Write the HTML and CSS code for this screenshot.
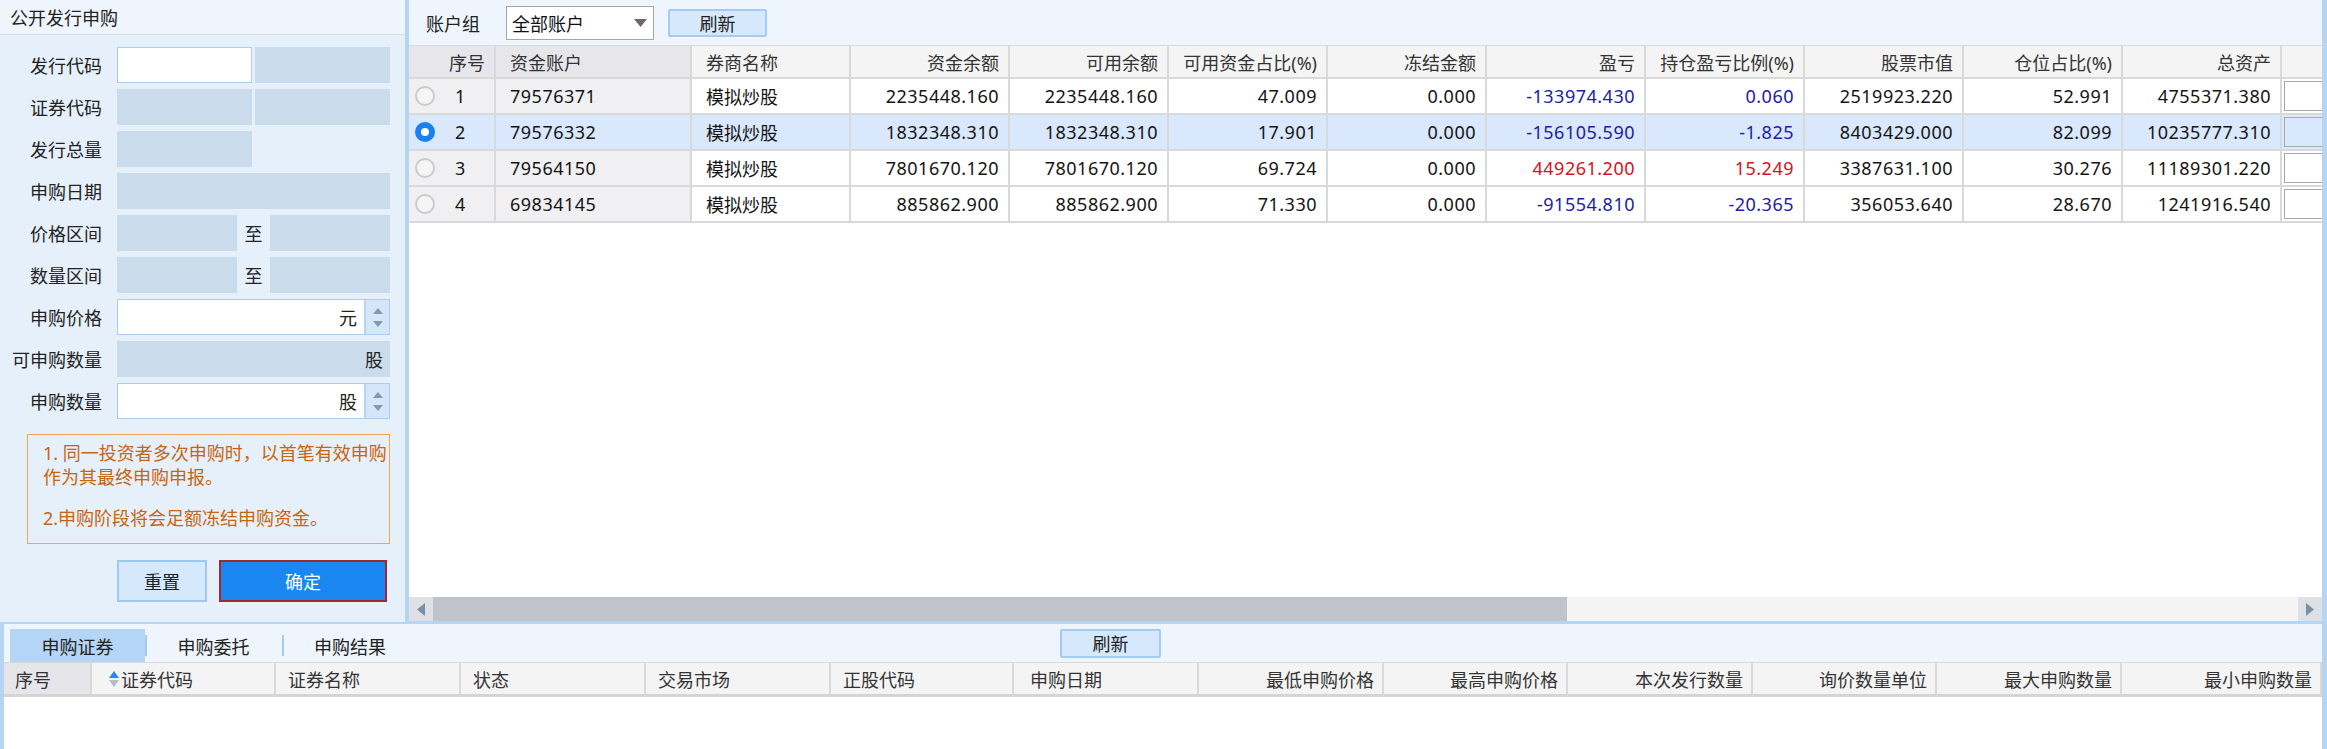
FILE: index.html
```html
<!DOCTYPE html>
<html lang="zh-CN">
<head>
<meta charset="utf-8">
<title>公开发行申购</title>
<link rel="stylesheet" href="styles.css">
</head>
<body>
<div class="app">
  <div class="top">
    <aside class="left">
      <div class="left-title">公开发行申购</div>
      <div class="form">
        <div class="frow"><label>发行代码</label><div class="pair"><div class="inp"></div><div class="box"></div></div></div>
        <div class="frow"><label>证券代码</label><div class="pair"><div class="box"></div><div class="box"></div></div></div>
        <div class="frow"><label>发行总量</label><div class="pair"><div class="box"></div><div></div></div></div>
        <div class="frow"><label>申购日期</label><div class="box"></div></div>
        <div class="frow"><label>价格区间</label><div class="range"><div class="box"></div><span class="to">至</span><div class="box"></div></div></div>
        <div class="frow"><label>数量区间</label><div class="range"><div class="box"></div><span class="to">至</span><div class="box"></div></div></div>
        <div class="frow"><label>申购价格</label>
          <div class="spin"><div class="spin-val">元</div>
            <div class="spin-btns">
              <svg width="10" height="6" viewBox="0 0 10 6"><polygon points="5,0 10,6 0,6" fill="#8898a9"/></svg>
              <svg width="10" height="6" viewBox="0 0 10 6"><polygon points="0,0 10,0 5,6" fill="#8898a9"/></svg>
            </div>
          </div>
        </div>
        <div class="frow"><label>可申购数量</label><div class="box unit">股</div></div>
        <div class="frow"><label>申购数量</label>
          <div class="spin"><div class="spin-val">股</div>
            <div class="spin-btns">
              <svg width="10" height="6" viewBox="0 0 10 6"><polygon points="5,0 10,6 0,6" fill="#8898a9"/></svg>
              <svg width="10" height="6" viewBox="0 0 10 6"><polygon points="0,0 10,0 5,6" fill="#8898a9"/></svg>
            </div>
          </div>
        </div>
      </div>
      <div class="notice">
        <p>1. 同一投资者多次申购时，以首笔有效申购<br>作为其最终申购申报。</p>
        <p>2.申购阶段将会足额冻结申购资金。</p>
      </div>
      <div class="btns">
        <button class="btn btn-reset">重置</button>
        <button class="btn btn-ok">确定</button>
      </div>
    </aside>

    <section class="main">
      <div class="toolbar">
        <span class="tb-label">账户组</span>
        <div class="select"><span>全部账户</span>
          <svg width="13" height="8" viewBox="0 0 13 8"><polygon points="0,0 13,0 6.5,8" fill="#6b6b6b"/></svg>
        </div>
        <button class="btn-refresh">刷新</button>
      </div>
      <div class="table">
        <div class="trow thead">
          <div class="fz">序号</div><div class="fz l">资金账户</div><div class="l">券商名称</div>
          <div>资金余额</div><div>可用余额</div><div>可用资金占比(%)</div><div>冻结金额</div>
          <div>盈亏</div><div>持仓盈亏比例(%)</div><div>股票市值</div><div>仓位占比(%)</div><div>总资产</div><div></div>
        </div>
        <div class="trow">
          <div class="fz c-idx"><span class="radio"></span><span class="n">1</span></div><div class="fz l num">79576371</div><div class="l">模拟炒股</div>
          <div class="num">2235448.160</div><div class="num">2235448.160</div><div class="num">47.009</div><div class="num">0.000</div>
          <div class="num neg">-133974.430</div><div class="num neg">0.060</div><div class="num">2519923.220</div><div class="num">52.991</div><div class="num">4755371.380</div><div class="cx"><i></i></div>
        </div>
        <div class="trow sel">
          <div class="fz c-idx"><span class="radio on"></span><span class="n">2</span></div><div class="fz l num">79576332</div><div class="l">模拟炒股</div>
          <div class="num">1832348.310</div><div class="num">1832348.310</div><div class="num">17.901</div><div class="num">0.000</div>
          <div class="num neg">-156105.590</div><div class="num neg">-1.825</div><div class="num">8403429.000</div><div class="num">82.099</div><div class="num">10235777.310</div><div class="cx"><i></i></div>
        </div>
        <div class="trow">
          <div class="fz c-idx"><span class="radio"></span><span class="n">3</span></div><div class="fz l num">79564150</div><div class="l">模拟炒股</div>
          <div class="num">7801670.120</div><div class="num">7801670.120</div><div class="num">69.724</div><div class="num">0.000</div>
          <div class="num pos">449261.200</div><div class="num pos">15.249</div><div class="num">3387631.100</div><div class="num">30.276</div><div class="num">11189301.220</div><div class="cx"><i></i></div>
        </div>
        <div class="trow">
          <div class="fz c-idx"><span class="radio"></span><span class="n">4</span></div><div class="fz l num">69834145</div><div class="l">模拟炒股</div>
          <div class="num">885862.900</div><div class="num">885862.900</div><div class="num">71.330</div><div class="num">0.000</div>
          <div class="num neg">-91554.810</div><div class="num neg">-20.365</div><div class="num">356053.640</div><div class="num">28.670</div><div class="num">1241916.540</div><div class="cx"><i></i></div>
        </div>
      </div>
      <div class="hscroll">
        <div class="sb-btn"><svg width="8" height="13" viewBox="0 0 8 13"><polygon points="8,0 8,13 0,6.5" fill="#7c8ea1"/></svg></div>
        <div class="sb-thumb"></div>
        <div class="sb-track"></div>
        <div class="sb-btn"><svg width="8" height="13" viewBox="0 0 8 13"><polygon points="0,0 8,6.5 0,13" fill="#7c8ea1"/></svg></div>
      </div>
    </section>
  </div>

  <div class="bottom">
    <div class="tabs">
      <div class="tab active">申购证券</div>
      <div class="tab t2">申购委托</div>
      <div class="tab t3">申购结果</div>
      <button class="btn-refresh brefresh">刷新</button>
    </div>
    <div class="bhead">
      <div class="fz">序号</div>
      <div class="sortcell"><svg width="10" height="16" viewBox="0 0 10 16"><polygon points="5,0 10,7 0,7" fill="#2b87ea"/><polygon points="0,9 10,9 5,16" fill="#b4bcc6"/></svg>证券代码</div>
      <div>证券名称</div><div>状态</div><div>交易市场</div><div>正股代码</div><div class="d">申购日期</div>
      <div class="r">最低申购价格</div><div class="r">最高申购价格</div><div class="r">本次发行数量</div>
      <div class="r">询价数量单位</div><div class="r">最大申购数量</div><div class="r">最小申购数量</div>
    </div>
    <div class="bbody"></div>
  </div>
</div>
</body>
</html>
```

FILE: styles.css
```css
* { box-sizing: border-box; margin: 0; padding: 0; }
body {
  margin: 0;
  font-family: "Noto Sans", "Noto Sans CJK SC", sans-serif;
  font-size: 18px;
  color: #1a1a1a;
  background: #b6d5f3;
  overflow: hidden;
}
.app {
  width: 2327px;
  height: 749px;
  display: flex;
  flex-direction: column;
  background: #b6d5f3;
}
.top { display: flex; height: 622px; gap: 4px; flex: none; }

/* left panel */
.left {
  width: 405px;
  flex: none;
  background: #e6f0fa;
  display: flex;
  flex-direction: column;
}
.left-title {
  height: 35px;
  background: #eef5fd;
  border-bottom: 1px solid #d3dae2;
  padding-left: 10px;
  line-height: 36px;
  color: #222;
}
.form { display: flex; flex-direction: column; gap: 6px; padding-top: 12px; }
.frow {
  display: grid;
  grid-template-columns: 102px 273px;
  column-gap: 15px;
  height: 36px;
}
.frow label {
  display: flex;
  align-items: center;
  justify-content: flex-end;
  color: #222;
  white-space: nowrap;
}
.pair { display: grid; grid-template-columns: 135px 135px; column-gap: 3px; }
.box { background: #cadbec; }
.inp { background: #fff; border: 1px solid #a9cef2; }
.range { display: grid; grid-template-columns: 120px 33px 120px; }
.range .to { display: flex; align-items: center; justify-content: center; color: #222; }
.unit { display: flex; align-items: center; justify-content: flex-end; padding-right: 7px; color: #222; }
.spin { display: flex; background: #fff; border: 1px solid #a9cef2; }
.spin-val { flex: 1; display: flex; align-items: center; justify-content: flex-end; padding-right: 7px; color: #222; }
.spin-btns {
  width: 25px;
  background: #d4e6f9;
  border-left: 2px solid #b6d5f3;
  display: flex;
  flex-direction: column;
  justify-content: space-around;
  align-items: center;
  padding: 4px 0;
}
.notice {
  margin: 15px 15px 0 27px;
  border: 1px solid #f2a650;
  padding: 6px 0 13px 15px;
  color: #c8650f;
  line-height: 24px;
  white-space: nowrap;
}
.notice p + p { margin-top: 17px; }
.btns { display: flex; gap: 12px; margin: 16px 0 0 117px; }
.btn {
  height: 42px;
  font: inherit;
  display: flex;
  align-items: center;
  justify-content: center;
}
.btn-reset { width: 90px; background: #d6e9fc; border: 2px solid #9fc8ef; color: #222; }
.btn-ok { width: 168px; background: #1a86f0; border: 2px solid #9e2a2e; color: #fff; }

/* main panel */
.main {
  width: 1913px;
  flex: none;
  background: #fff;
  display: flex;
  flex-direction: column;
  border-bottom: 1px solid #b6d5f3;
}
.toolbar {
  height: 45px;
  flex: none;
  background: #eef5fd;
  display: flex;
  align-items: center;
  padding-left: 17px;
}
.tb-label { margin-right: 26px; color: #222; }
.select {
  width: 148px;
  height: 34px;
  background: #fff;
  border: 1px solid #a6a6a6;
  display: flex;
  align-items: center;
  justify-content: space-between;
  padding: 0 6px 0 5px;
  color: #111;
}
.btn-refresh {
  width: 99px;
  height: 28px;
  margin-left: 14px;
  background: #d6e9fc;
  border: 2px solid #a3ccf0;
  border-radius: 2px;
  font: inherit;
  color: #222;
  display: flex;
  align-items: center;
  justify-content: center;
}
.table { flex: 1; overflow: hidden; background: #fff; min-height: 0; }
.trow {
  display: grid;
  grid-template-columns: 87px 196px repeat(10, 159px) 100px;
  height: 36px;
  width: max-content;
}
.trow > div {
  border-right: 2px solid #d9d9d9;
  border-bottom: 2px solid #d9d9d9;
  display: flex;
  align-items: center;
  justify-content: flex-end;
  padding: 0 9px;
  white-space: nowrap;
  overflow: hidden;
  color: #141414;
}
.trow > .fz { background: #f0f0f3; }
.trow > .l { justify-content: flex-start; padding-left: 14px; }
.thead { height: 34px; }
.thead > div { background: #f4f4f4; border-top: 1px solid #d9d9d9; color: #333; }
.thead > .fz { background: #e7e7eb; }
.trow.sel > div { background: #d9e8fc; }
.num { letter-spacing: 0.5px; }
.trow > .neg { color: #1c1ca8; }
.trow > .pos { color: #d5121b; }
.trow > .c-idx { justify-content: flex-start; padding-left: 6px; }
.c-idx .n { margin-left: 20px; }
.radio {
  width: 20px;
  height: 20px;
  border-radius: 50%;
  border: 2px solid #cbcbcb;
  background: #f5f5f5;
  display: flex;
  align-items: center;
  justify-content: center;
}
.radio.on { background: #1a7ff0; border-color: #1a7ff0; }
.radio.on::after {
  content: "";
  width: 8px;
  height: 8px;
  border-radius: 50%;
  background: #fff;
}
.trow > .cx { padding: 2px 0 2px 2px; align-items: stretch; }
.cx i { flex: 1; border: 1px solid #a8a8a8; background: #fff; }
.sel .cx i { background: #d9e8fc; }

.hscroll { height: 24px; flex: none; display: flex; background: #f4f4f4; }
.sb-btn { width: 24px; flex: none; background: #dde1e6; display: flex; align-items: center; justify-content: center; }
.sb-thumb { width: 1134px; flex: none; background: #c0c4ca; }
.sb-track { flex: 1; }

/* bottom */
.bottom {
  flex: 1;
  margin: 2px 5px 0 4px;
  background: #fff;
  display: flex;
  flex-direction: column;
  min-height: 0;
}
.tabs {
  height: 38px;
  flex: none;
  background: #eef5fd;
  display: flex;
  align-items: flex-end;
  padding-left: 6px;
}
.tab {
  height: 33px;
  display: flex;
  align-items: center;
  justify-content: center;
  position: relative;
  color: #222;
}
.tab.active { width: 135px; background: #b4d5f5; }
.tab.t2 { width: 137px; }
.tab.t3 { width: 136px; }
.tab + .tab::before {
  content: "";
  position: absolute;
  left: 0;
  top: 6px;
  width: 2px;
  height: 21px;
  background: #aac9e7;
}
.brefresh { margin-left: 642px; align-self: center; width: 101px; height: 29px; }
.bhead {
  display: grid;
  grid-template-columns: 88px 184px 185px 185px 185px 183px 185px 185px 184px 185px 184px 185px 1fr;
  height: 35px;
  flex: none;
}
.bhead > div {
  background: #f4f4f4;
  border-top: 1px solid #d9d9d9;
  border-bottom: 3px solid #d4d4d4;
  border-right: 2px solid #d9d9d9;
  display: flex;
  align-items: center;
  padding: 0 12px;
  color: #333;
  white-space: nowrap;
}
.bhead > .fz { background: #e6e6ea; padding-left: 11px; }
.bhead > .r { justify-content: flex-end; padding-right: 8px; }
.bhead > .d { padding-left: 16px; }
.bhead > .sortcell { padding-left: 17px; gap: 2px; }
.bbody { flex: 1; background: #fff; }
```
